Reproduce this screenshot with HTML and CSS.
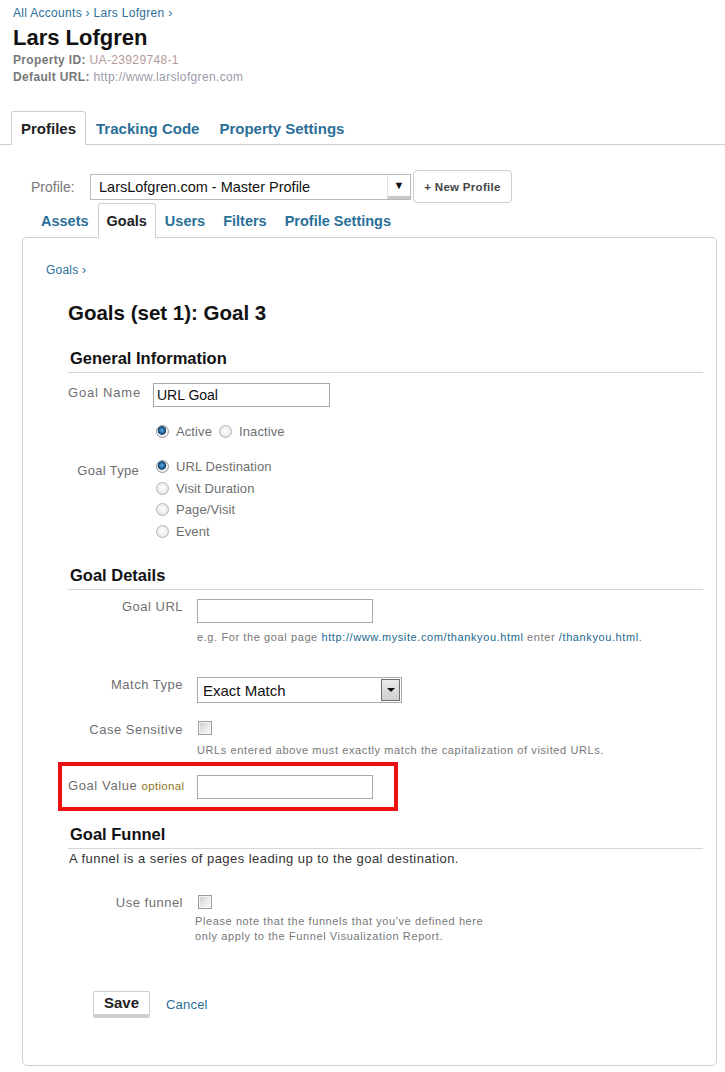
FILE: index.html
```html
<!DOCTYPE html>
<html>
<head>
<meta charset="utf-8">
<title>Goals</title>
<link rel="stylesheet" href="styles.css">
</head>
<body>
<div class="header">
  <div class="crumbs"><a href="#">All Accounts</a> › <a href="#">Lars Lofgren</a> ›</div>
  <h1 class="title">Lars Lofgren</h1>
  <div class="meta"><b>Property ID:</b> <span class="id">UA-23929748-1</span></div>
  <div class="meta"><b>Default URL:</b> <span class="url">http://www.larslofgren.com</span></div>
</div>

<nav class="tabs">
  <span class="tab active">Profiles</span>
  <a class="tab" href="#">Tracking Code</a>
  <a class="tab" href="#">Property Settings</a>
</nav>

<div class="profile-row">
  <span class="profile-label">Profile:</span>
  <div class="select profile-select">
    <span class="select-text">LarsLofgren.com - Master Profile</span>
    <span class="select-arrow">▼</span>
  </div>
  <button class="btn-new">+ New Profile</button>
</div>

<nav class="subtabs">
  <a class="subtab" href="#">Assets</a>
  <span class="subtab active">Goals</span>
  <a class="subtab" href="#">Users</a>
  <a class="subtab" href="#">Filters</a>
  <a class="subtab" href="#">Profile Settings</a>
</nav>

<div class="panel">
  <div class="panel-crumb"><a href="#">Goals</a> ›</div>
  <div class="form">
    <h2 class="goal-title">Goals (set 1): Goal 3</h2>

    <h3 class="section">General Information</h3>
    <div class="grid general">
      <label class="lbl lbl-name">Goal Name</label>
      <div><div class="input name-input">URL Goal</div></div>

      <span></span>
      <div class="inline-radios">
        <span class="opt"><span class="radio on"></span>Active</span>
        <span class="opt"><span class="radio"></span>Inactive</span>
      </div>

      <label class="lbl lbl-type">Goal Type</label>
      <div class="radio-list">
        <span class="opt"><span class="radio on"></span>URL Destination</span>
        <span class="opt"><span class="radio"></span>Visit Duration</span>
        <span class="opt"><span class="radio"></span>Page/Visit</span>
        <span class="opt"><span class="radio"></span>Event</span>
      </div>
    </div>

    <h3 class="section details-head">Goal Details</h3>
    <div class="grid details">
      <label class="lbl">Goal URL</label>
      <div>
        <div class="input wide-input"></div>
        <p class="hint hint-url">e.g. For the goal page <a href="#">http://www.mysite.com/thankyou.html</a> enter <a href="#">/thankyou.html</a>.</p>
      </div>

      <label class="lbl lbl-match">Match Type</label>
      <div class="select match-select">
        <span class="select-text">Exact Match</span>
        <span class="win-arrow"><span class="tri"></span></span>
      </div>

      <label class="lbl lbl-case">Case Sensitive</label>
      <div class="case-cell">
        <span class="checkbox"></span>
        <p class="hint hint-case">URLs entered above must exactly match the capitalization of visited URLs.</p>
      </div>
    </div>

    <div class="grid details highlight">
      <label class="lbl">Goal Value <span class="optional">optional</span></label>
      <div><div class="input wide-input"></div></div>
    </div>

    <h3 class="section funnel-head">Goal Funnel</h3>
    <p class="funnel-desc">A funnel is a series of pages leading up to the goal destination.</p>
    <div class="grid details funnel">
      <label class="lbl lbl-funnel">Use funnel</label>
      <div>
        <span class="checkbox"></span>
        <p class="hint hint-funnel">Please note that the funnels that you've defined here<br>only apply to the Funnel Visualization Report.</p>
      </div>
    </div>

    <div class="actions">
      <button class="btn-save">Save</button>
      <a class="cancel" href="#">Cancel</a>
    </div>
  </div>
</div>
</body>
</html>
```

FILE: styles.css
```css
* { box-sizing: border-box; }

body {
  margin: 0;
  font-family: "Liberation Sans", Arial, sans-serif;
  color: #222;
  background: #fff;
}

a { color: #2a6f98; text-decoration: none; }

/* header */
.header { padding: 6px 0 0 13px; }
.crumbs { font-size: 12px; line-height: 14px; color: #2a6f98; letter-spacing: 0.3px; }
.title {
  margin: 5px 0 0;
  font-size: 22px;
  line-height: 25px;
  font-weight: bold;
  color: #111;
}
.meta { font-size: 12px; line-height: 17px; color: #a0a0a0; letter-spacing: 0.35px; }
.title + .meta { margin-top: 2px; }
.meta b { color: #787878; }
.meta .id { color: #b29a9a; }
.meta .url { color: #9a9aa8; }

/* top tabs */
.tabs {
  display: flex;
  align-items: flex-start;
  margin-top: 25px;
  padding-left: 11px;
  border-bottom: 1px solid #cfcfcf;
}
.tab {
  height: 33px;
  line-height: 33px;
  padding: 0 9px;
  font-size: 15px;
  font-weight: bold;
  color: #2a6f98;
  border: 1px solid transparent;
  border-bottom: none;
}
.tab.active {
  border-color: #cfcfcf;
  border-radius: 3px 3px 0 0;
  background: #fff;
  color: #222;
  height: 34px;
  margin-bottom: -1px;
}

/* profile row */
.profile-row {
  display: flex;
  align-items: center;
  margin-top: 25px;
  padding-left: 31px;
}
.profile-label { font-size: 14px; color: #777; width: 59px; }
.select {
  display: flex;
  align-items: center;
  border: 1px solid #b9b9b9;
  background: #fff;
}
.profile-select { width: 321px; height: 26px; }
.select-text { flex: 1; padding-left: 8px; font-size: 14.5px; color: #111; }
.select-arrow {
  width: 23px;
  height: 24px;
  font-size: 11px;
  line-height: 20px;
  text-align: center;
  color: #111;
  background: #fff;
  border-left: 1px solid #e4e4e4;
  border-bottom: 3px solid #c9c9c9;
}
.btn-new {
  margin-left: 2px;
  width: 99px;
  height: 33px;
  border: 1px solid #cfcfcf;
  border-radius: 4px;
  background: #fff;
  font-family: inherit;
  font-size: 11.5px;
  font-weight: bold;
  letter-spacing: 0.3px;
  color: #444;
  padding: 0;
}

/* subtabs */
.subtabs {
  position: relative;
  z-index: 1;
  display: flex;
  padding-left: 32px;
  margin-bottom: -1px;
}
.subtab {
  height: 35px;
  line-height: 35px;
  padding: 0 8px;
  font-size: 14.5px;
  font-weight: bold;
  color: #2a6f98;
  border: 1px solid transparent;
  border-bottom: none;
}
.subtab.active {
  border-color: #cfcfcf;
  border-radius: 3px 3px 0 0;
  background: #fff;
  color: #222;
}

/* panel */
.panel {
  margin: 0 8px 0 22px;
  border: 1px solid #cfcfcf;
  border-radius: 5px;
  padding: 24px 13px 47px 23px;
}
.panel-crumb { font-size: 12px; line-height: 16px; color: #2a6f98; letter-spacing: 0.2px; }

.form { margin-left: 22px; }
.goal-title {
  margin: 23px 0 0;
  font-size: 20.5px;
  line-height: 24px;
  font-weight: bold;
  color: #111;
}
.section {
  margin: 23px 0 0;
  padding: 0 0 4px 2px;
  font-size: 16.5px;
  line-height: 20px;
  font-weight: bold;
  color: #111;
  border-bottom: 1px solid #d6d6d6;
}

.grid { display: grid; column-gap: 14px; }
.general { grid-template-columns: 71px auto; margin-top: 10px; }
.details { grid-template-columns: 115px auto; }

.lbl {
  text-align: right;
  font-size: 13px;
  line-height: 16px;
  color: #6f6f6f;
  letter-spacing: 0.5px;
  white-space: nowrap;
}
.lbl-name { padding-top: 2px; letter-spacing: 0.8px; }
.lbl-type { padding-top: 20px; letter-spacing: 0.3px; }

.input {
  height: 24px;
  border: 1px solid #a9a9a9;
  background: #fff;
  font-size: 14px;
  line-height: 22px;
  padding-left: 3px;
  color: #111;
}
.name-input { width: 177px; }
.wide-input { width: 176px; }

.opt {
  display: flex;
  align-items: center;
  font-size: 13px;
  color: #6f6f6f;
  height: 21.7px;
  letter-spacing: 0.1px;
}
.inline-radios { display: flex; gap: 7px; margin-top: 14px; padding-left: 3px; }
.radio-list { margin-top: 13px; padding-left: 3px; }
.radio {
  width: 13px;
  height: 13px;
  margin-right: 7px;
  border-radius: 50%;
  border: 1px solid #b5b5b5;
  background: radial-gradient(circle at 50% 45%, #fff 0, #eee 55%, #d0d0d0 100%);
}
.radio.on {
  border-color: #9a9a9a;
  background: radial-gradient(circle at 45% 40%, #6fb2e6 0, #2b6fa8 25%, #1d4469 45%, #f4f4f4 52%, #ddd 100%);
}

.details-head { margin-top: 23px; }
.details { margin-top: 9px; }

.hint {
  margin: 7px 0 0;
  font-size: 11px;
  line-height: 14px;
  color: #777;
  letter-spacing: 0.6px;
}
.hint a { color: #22688f; }
.hint-url { margin-bottom: 33px; }

.match-select { width: 205px; height: 26px; border-color: #a9a9a9; margin-bottom: 18px; }
.match-select .select-text { padding-left: 5px; font-size: 15px; }
.win-arrow {
  display: flex;
  align-items: center;
  justify-content: center;
  width: 19px;
  height: 22px;
  margin-right: 1px;
  background: linear-gradient(#ebebeb, #cfcfcf);
  border: 1px solid #6e6e6e;
}
.tri {
  width: 0;
  height: 0;
  border-left: 4px solid transparent;
  border-right: 4px solid transparent;
  border-top: 4px solid #111;
}

.lbl-case { padding-top: 1px; }
.checkbox {
  display: block;
  width: 14px;
  height: 14px;
  margin-left: 1px;
  border: 1px solid #9c9c9c;
  background: linear-gradient(135deg, #c8c8c8 0, #e8e8e8 50%, #fbfbfb 100%);
  box-shadow: inset 0 0 0 1px #f5f5f5;
}
.hint-case { margin-top: 8px; }

.highlight {
  width: fit-content;
  margin-top: 5px;
  margin-left: -10px;
  padding: 9px 21px 8px 6px;
  border: 4px solid #ee1111;
}
.highlight .lbl { text-align: left; padding-top: 3px; letter-spacing: 0.6px; }
.optional { font-size: 11.5px; color: #8c7420; letter-spacing: 0.3px; }

.funnel-head { margin-top: 13px; }
.funnel-desc {
  margin: 2px 0 0 1px;
  font-size: 13px;
  line-height: 15px;
  color: #333;
  letter-spacing: 0.45px;
}
.funnel { margin-top: 29px; }
.lbl-funnel { padding-top: 0; }
.hint-funnel { margin: 5px 0 0 -2px; line-height: 15px; }

.actions {
  display: flex;
  align-items: center;
  gap: 16px;
  margin-top: 47px;
  padding-left: 25px;
}
.btn-save {
  width: 57px;
  height: 27px;
  padding: 0 0 2px;
  font-family: inherit;
  font-size: 15px;
  font-weight: bold;
  color: #222;
  background: #fff;
  border: 1px solid #d0d0d0;
  border-bottom: 4px solid #cfcfcf;
  border-radius: 2px;
}
.cancel { font-size: 13px; letter-spacing: 0.2px; }
```
